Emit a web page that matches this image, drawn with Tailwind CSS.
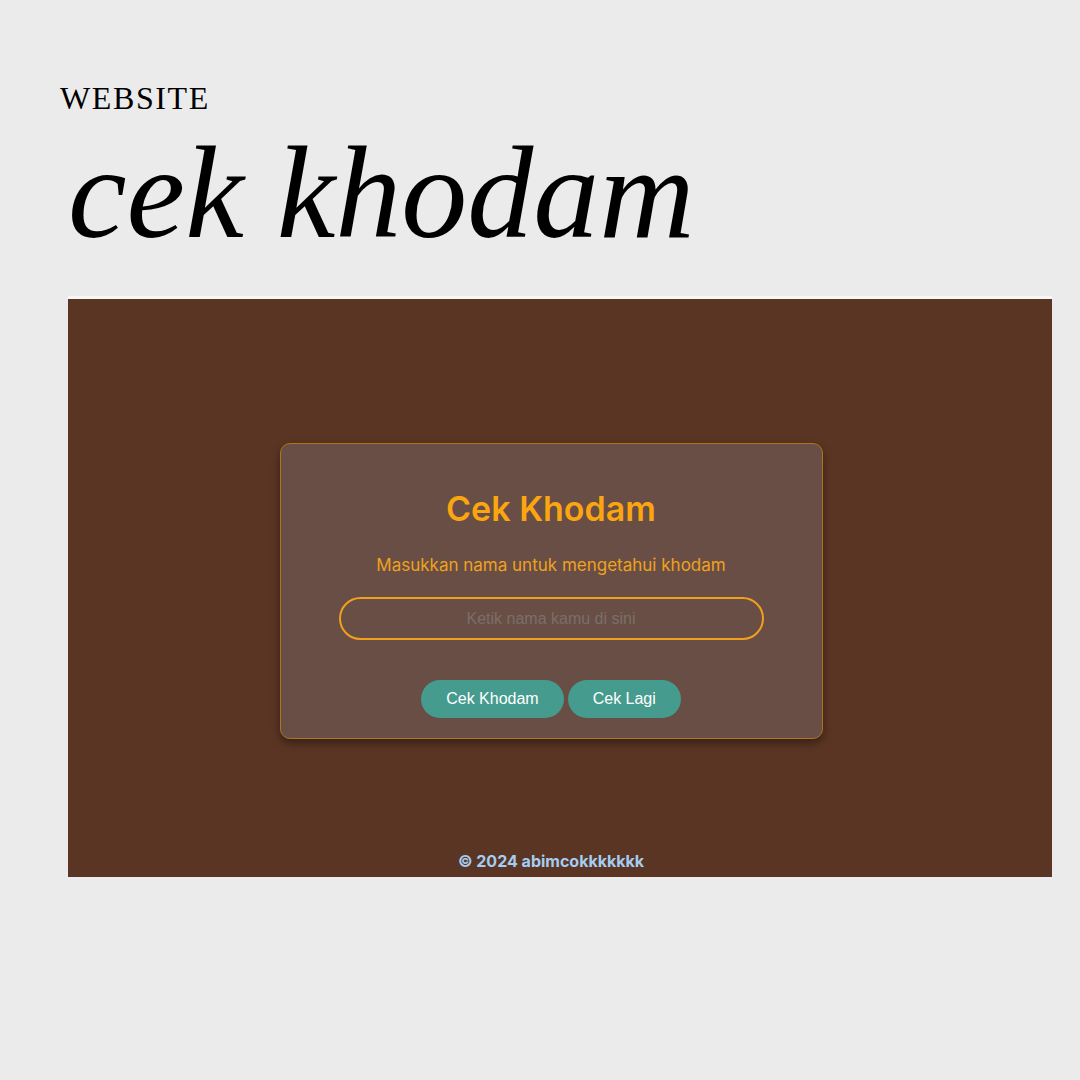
<!DOCTYPE html>
<html lang="id">
<head>
<meta charset="utf-8">
<meta name="viewport" content="width=device-width, initial-scale=1">
<title>Cek Khodam</title>
<script src="https://cdn.jsdelivr.net/npm/@tailwindcss/browser@4"></script>
</head>
<body class="min-h-screen bg-[#ebebeb] pt-[78px] pr-7 pl-[68px] font-['Inter',sans-serif]">
  <header class="-ml-2 font-['Liberation_Serif',serif] text-black">
    <p class="text-[32px] leading-10 tracking-wider">WEBSITE</p>
    <h1 class="pl-2 text-[132px] leading-[150px] italic">cek khodam</h1>
  </header>

  <div class="mt-7 flex min-h-[581px] flex-col border-t-3 border-[#f7f7f4] bg-[#5a3523] pr-[18px]">
    <main class="flex flex-1 flex-col items-center pt-36">
      <section class="flex w-full max-w-[543px] flex-col items-center rounded-[10px] border border-[#b07420] bg-[#684e45] px-[58px] pt-[45px] pb-5 text-center shadow-[0_4px_8px_rgba(0,0,0,0.4)]">
        <h2 class="text-[34px] leading-10 font-semibold text-[#fba510]">Cek Khodam</h2>
        <label for="nama" class="mt-6 text-[17px] leading-6 text-[#f0a11e]">Masukkan nama untuk mengetahui khodam</label>
        <input id="nama" type="text" placeholder="Ketik nama kamu di sini" class="mt-5 h-[43px] w-full rounded-full border-2 border-[#f0a01c] bg-transparent px-4 text-center font-['Liberation_Sans',sans-serif] text-base text-white placeholder:text-[#7b6e69]">
        <div class="mt-10 flex gap-1 font-['Liberation_Sans',sans-serif] text-base leading-6 text-white">
          <button type="button" class="rounded-full bg-[#459b8e] px-[25px] py-[7px]">Cek Khodam</button>
          <button type="button" class="rounded-full bg-[#459b8e] px-[25px] py-[7px]">Cek Lagi</button>
        </div>
      </section>
    </main>
    <footer class="pb-1 text-center text-base leading-6 font-bold text-[#a5cdf2]">© 2024 abimcokkkkkkk</footer>
  </div>
</body>
</html>
